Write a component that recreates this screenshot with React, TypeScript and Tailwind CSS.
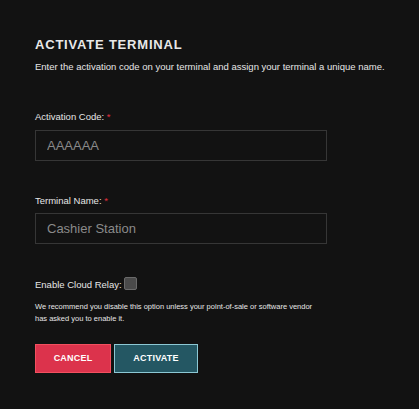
export default function App() {
    return (
        <div className="w-[419px] h-[409px] bg-[#121212] text-[#e6e6e6] font-['Liberation_Sans',Arial,sans-serif] overflow-hidden">
            <div className="pt-[37px] pl-[35px] w-[327px]">
                <h1 className="text-[13px] leading-[15px] font-bold tracking-[0.8px] text-[#e8e8e8]">ACTIVATE TERMINAL</h1>
                <p className="mt-[9px] text-[9.5px] leading-[11px] whitespace-nowrap">Enter the activation code on your terminal and assign your terminal a unique name.</p>

                {/* activation code */}
                <label className="block mt-[39px] text-[9.5px] leading-[11px]">
                    Activation Code: <span className="text-[#e0303f]">*</span>
                </label>
                <input
                    defaultValue="AAAAAA"
                    className="block mt-[8px] w-[292px] h-[31px] px-[11px] bg-[#121212] border border-[#363636] text-[13px] text-[#8a8a8a] outline-none"
                />

                {/* terminal name */}
                <label className="block mt-[34px] text-[9.5px] leading-[11px]">
                    Terminal Name: <span className="text-[#e0303f]">*</span>
                </label>
                <input
                    defaultValue="Cashier Station"
                    className="block mt-[7px] w-[292px] h-[31px] px-[11px] bg-[#121212] border border-[#363636] text-[13px] text-[#8a8a8a] outline-none"
                />

                <div className="mt-[35px] flex items-center gap-[2px] text-[9.5px] leading-[11px]">
                    <span>Enable Cloud Relay:</span>
                    <span className="inline-block w-[13px] h-[13px] rounded-[2px] bg-[#4a4a4a] border border-[#6a6a6a] -mt-[3px]" />
                </div>
                <p className="mt-[11px] text-[7.5px] leading-[12px] w-[290px]">
                    We recommend you disable this option unless your point-of-sale or software vendor has asked you to enable it.
                </p>

                <div className="mt-[19px] flex gap-[3px]">
                    <button className="w-[76px] h-[29px] bg-[#dc334c] border border-[#f2505f] text-white text-[9px] tracking-[0.2px] font-bold">CANCEL</button>
                    <button className="w-[84px] h-[29px] bg-[#245763] border border-[#8cc8d4] text-white text-[9px] tracking-[0.2px] font-bold">ACTIVATE</button>
                </div>
            </div>
        </div>
    )
}
